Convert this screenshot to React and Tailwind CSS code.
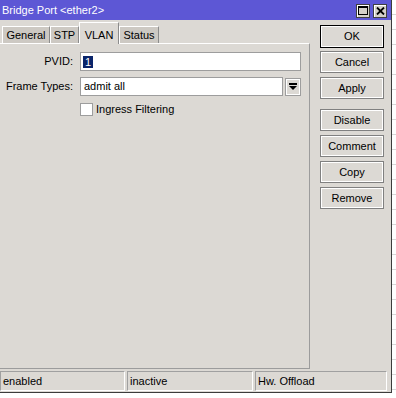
export default function App() {
  const btn =
    "w-[64px] h-[22px] flex items-center justify-center border border-[#808080] shadow-[inset_0_0_0_1px_#ffffff] text-[11px] text-black";
  return (
    <div
      className="w-[396px] h-[398px] bg-white flex flex-col overflow-hidden"
      style={{ fontFamily: '"Liberation Sans", Arial, sans-serif' }}
    >
      <div className="h-[393px] flex">
        {/* window */}
        <div className="w-[392px] h-full border-r border-b border-[#3c3c3c] bg-[#dcd9d4] flex flex-col">
          {/* title bar */}
          <div className="h-[20px] bg-[#5d57d5] flex items-center justify-between">
            <span className="pl-[2px] pt-[1px] text-white text-[11px] leading-none">
              Bridge Port &lt;ether2&gt;
            </span>
            <div className="flex gap-[3px] pr-[4px] pt-[1px]">
              <div className="w-[14px] h-[14px] bg-[#d4d0c8] border border-[#404040] shadow-[inset_1px_1px_0_#ffffff] flex items-center justify-center">
                <svg width="10" height="9" viewBox="0 0 10 9">
                  <rect x="0.5" y="0.5" width="9" height="8" fill="none" stroke="#000" />
                  <rect x="0" y="0" width="10" height="2" fill="#000" />
                </svg>
              </div>
              <div className="w-[14px] h-[14px] bg-[#d4d0c8] border border-[#404040] shadow-[inset_1px_1px_0_#ffffff] flex items-center justify-center">
                <svg width="9" height="8" viewBox="0 0 9 8">
                  <path d="M1 0.5 L8 7.5 M8 0.5 L1 7.5" stroke="#000" strokeWidth="1.8" />
                </svg>
              </div>
            </div>
          </div>

          {/* main row */}
          <div className="h-[349px] flex">
            {/* left column */}
            <div className="w-[310px] flex flex-col">
              <div className="h-[23px] flex items-end pl-[2px] relative z-10">
                <div className="w-[48px] h-[17px] bg-[#cdc9c3] border-t border-l border-white border-r border-r-[#8c8c8c] flex items-center justify-center text-[11px] text-black">
                  General
                </div>
                <div className="w-[29px] h-[17px] bg-[#cdc9c3] border-t border-l border-white border-r border-r-[#8c8c8c] flex items-center justify-center text-[11px] text-black">
                  STP
                </div>
                <div className="w-[40px] h-[22px] -mb-[1px] bg-[#dcd9d4] border-t border-l border-white border-r border-r-[#8c8c8c] flex items-start justify-center pt-[4px] text-[11px] text-black">
                  VLAN
                </div>
                <div className="w-[40px] h-[17px] bg-[#cdc9c3] border-t border-l border-white border-r border-r-[#8c8c8c] flex items-center justify-center text-[11px] text-black">
                  Status
                </div>
              </div>
              <div className="flex-1 border-t border-white border-r border-r-[#9c9c9c] border-b border-b-[#9c9c9c] flex flex-col pt-[8px] text-[11px] text-black">
                <div className="h-[19px] flex items-center gap-[7px]">
                  <span className="w-[73px] text-right">PVID:</span>
                  <div className="w-[221px] h-[19px] border border-[#9d9d9d] bg-white flex items-center pl-[2px]">
                    <span className="bg-[#0a246a] text-white px-[2px] leading-[12px]">1</span>
                  </div>
                </div>
                <div className="h-[19px] mt-[6px] flex items-center gap-[7px]">
                  <span className="w-[73px] text-right">Frame Types:</span>
                  <div className="flex items-center gap-[2px]">
                    <div className="w-[203px] h-[19px] border border-[#9d9d9d] bg-white flex items-center pl-[3px]">
                      admit all
                    </div>
                    <div className="w-[16px] h-[18px] border border-[#9d9d9d] shadow-[inset_0_0_0_1px_#ffffff] flex items-center justify-center">
                      <svg width="8" height="7" viewBox="0 0 8 7">
                        <rect x="0" y="0" width="8" height="2" fill="#000" />
                        <path d="M0 3 H8 L4 7 Z" fill="#000" />
                      </svg>
                    </div>
                  </div>
                </div>
                <div className="h-[19px] mt-[4px] flex items-center">
                  <div className="w-[80px]" />
                  <div className="w-[13px] h-[13px] border border-[#9d9d9d] bg-white" />
                  <span className="ml-[3px]">Ingress Filtering</span>
                </div>
              </div>
            </div>
            {/* right column */}
            <div className="pl-[10px] pt-[5px] flex flex-col">
              <div className="w-[64px] h-[23px] flex items-center justify-center border border-black shadow-[inset_0_0_0_1px_#ffffff] text-[11px] text-black">
                OK
              </div>
              <div className={btn + " mt-[3px]"}>Cancel</div>
              <div className={btn + " mt-[4px]"}>Apply</div>
              <div className={btn + " mt-[10px]"}>Disable</div>
              <div className={btn + " mt-[4px]"}>Comment</div>
              <div className={btn + " mt-[4px]"}>Copy</div>
              <div className={btn + " mt-[4px]"}>Remove</div>
            </div>
          </div>

          {/* status bar */}
          <div className="flex-1 flex items-start pt-[2px] gap-[2px] text-[11px] text-black">
            <div className="w-[125px] h-[20px] border-t border-l border-[#a0a0a0] border-b border-b-white border-r border-r-white flex items-center pl-[2px]">
              enabled
            </div>
            <div className="w-[126px] h-[20px] border-t border-l border-[#a0a0a0] border-b border-b-white border-r border-r-white flex items-center pl-[2px]">
              inactive
            </div>
            <div className="w-[132px] h-[20px] border-t border-l border-[#a0a0a0] border-b border-b-white border-r border-r-white flex items-center pl-[2px]">
              Hw. Offload
            </div>
          </div>
        </div>
        {/* background table lines */}
        <div className="flex-1 bg-[repeating-linear-gradient(to_bottom,#ffffff_0px,#ffffff_14px,#d8d8d8_14px,#d8d8d8_15px)]" />
      </div>
      <div className="flex-1 bg-white" />
    </div>
  );
}
